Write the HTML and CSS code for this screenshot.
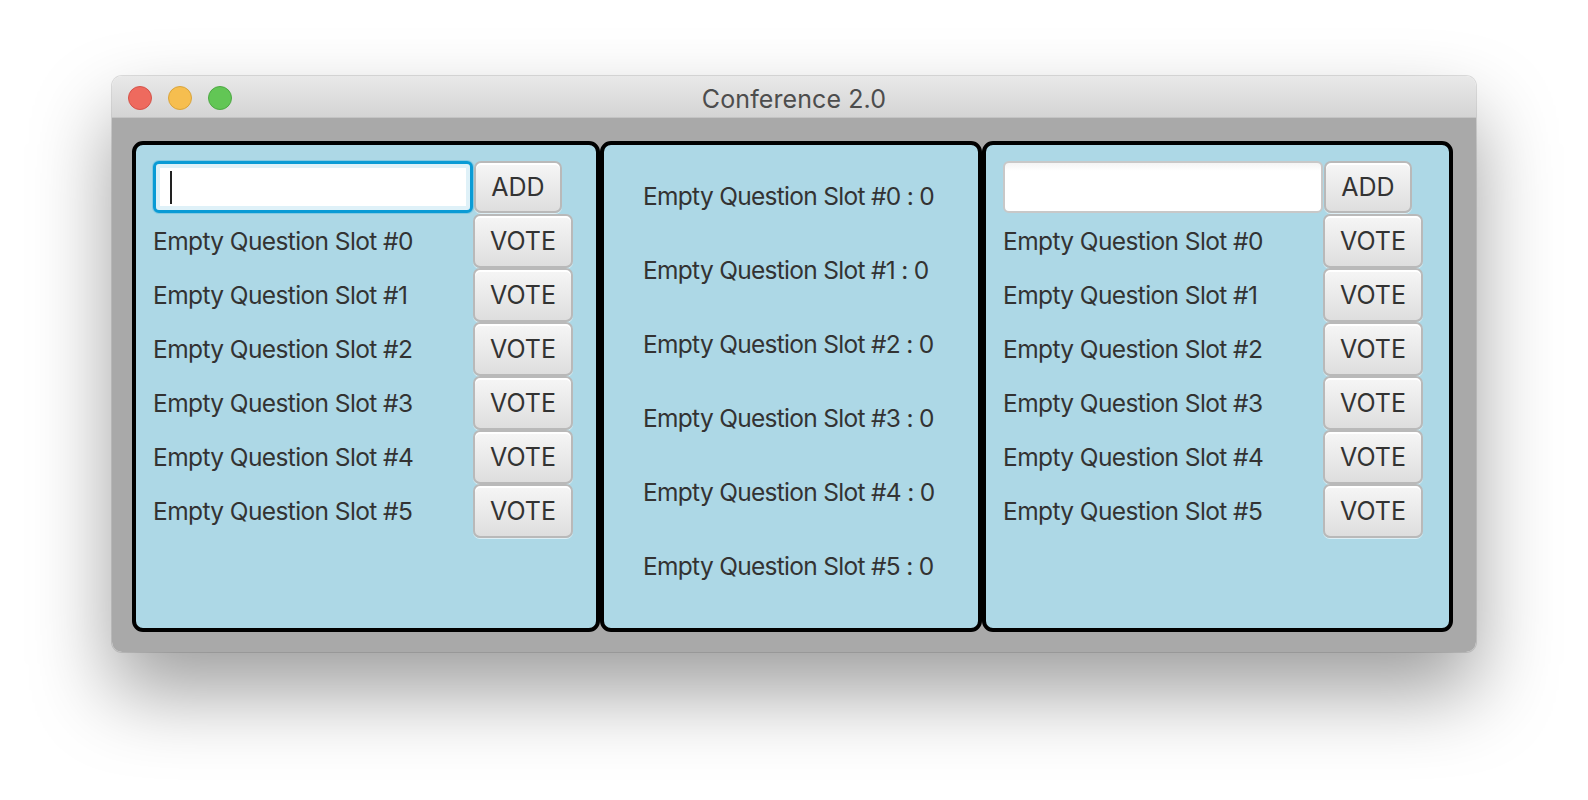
FILE: index.html
```html
<!DOCTYPE html>
<html>
<head>
<meta charset="utf-8">
<link rel="stylesheet" href="styles.css">
</head>
<body>
<div class="window">
  <div class="titlebar">
    <div class="lights">
      <span class="light red"></span>
      <span class="light yellow"></span>
      <span class="light green"></span>
    </div>
    <div class="title">Conference 2.0</div>
  </div>
  <div class="content">
    <div class="panel side">
      <div class="row">
        <div class="field focused"><span class="caret"></span></div>
        <button class="btn add">ADD</button>
      </div>
      <div class="row"><span class="label">Empty Question Slot #0</span><button class="btn vote">VOTE</button></div>
      <div class="row"><span class="label">Empty Question Slot #1</span><button class="btn vote">VOTE</button></div>
      <div class="row"><span class="label">Empty Question Slot #2</span><button class="btn vote">VOTE</button></div>
      <div class="row"><span class="label">Empty Question Slot #3</span><button class="btn vote">VOTE</button></div>
      <div class="row"><span class="label">Empty Question Slot #4</span><button class="btn vote">VOTE</button></div>
      <div class="row"><span class="label">Empty Question Slot #5</span><button class="btn vote">VOTE</button></div>
    </div>
    <div class="panel middle">
      <div class="mlabel">Empty Question Slot #0 : 0</div>
      <div class="mlabel">Empty Question Slot #1 : 0</div>
      <div class="mlabel">Empty Question Slot #2 : 0</div>
      <div class="mlabel">Empty Question Slot #3 : 0</div>
      <div class="mlabel">Empty Question Slot #4 : 0</div>
      <div class="mlabel">Empty Question Slot #5 : 0</div>
    </div>
    <div class="panel side right">
      <div class="row">
        <div class="field"></div>
        <button class="btn add">ADD</button>
      </div>
      <div class="row"><span class="label">Empty Question Slot #0</span><button class="btn vote">VOTE</button></div>
      <div class="row"><span class="label">Empty Question Slot #1</span><button class="btn vote">VOTE</button></div>
      <div class="row"><span class="label">Empty Question Slot #2</span><button class="btn vote">VOTE</button></div>
      <div class="row"><span class="label">Empty Question Slot #3</span><button class="btn vote">VOTE</button></div>
      <div class="row"><span class="label">Empty Question Slot #4</span><button class="btn vote">VOTE</button></div>
      <div class="row"><span class="label">Empty Question Slot #5</span><button class="btn vote">VOTE</button></div>
    </div>
  </div>
</div>
</body>
</html>
```

FILE: styles.css
```css
html, body {
  margin: 0;
  padding: 0;
  background: #ffffff;
  width: 1588px;
  height: 800px;
  overflow: hidden;
}
body {
  padding: 76px 0 0 112px;
  box-sizing: border-box;
  font-family: Inter, "Open Sans", sans-serif;
}
.window {
  width: 1364px;
  border-radius: 10px;
  overflow: hidden;
  box-shadow: 0 40px 80px rgba(0, 0, 0, 0.38), 0 0 0 1px rgba(0, 0, 0, 0.12);
}
.titlebar {
  position: relative;
  height: 41px;
  background: linear-gradient(#e9e9e9, #d4d4d4);
  border-bottom: 1px solid #c4c4c4;
  display: flex;
  align-items: center;
  justify-content: center;
}
.lights {
  position: absolute;
  left: 16px;
  top: 10px;
  display: flex;
  gap: 16px;
}
.light {
  width: 22px;
  height: 22px;
  border-radius: 50%;
  display: block;
}
.red { background: #ee6a5e; border: 1px solid #d4534a; }
.yellow { background: #f6be4f; border: 1px solid #d9a43c; }
.green { background: #62c655; border: 1px solid #4ea844; }
.title {
  font-size: 25px;
  color: #4d4d4d;
  letter-spacing: 0.1px;
  padding-top: 4px;
}
.content {
  background: #a9a9a9;
  padding: 23px 23px 20px 20px;
  display: flex;
}
.panel {
  height: 491px;
  box-sizing: border-box;
  background: #add8e6;
  border: 4px solid #000;
  border-radius: 11px;
}
.side {
  width: 468px;
  padding: 16px 0 0 17px;
  display: flex;
  flex-direction: column;
  gap: 2px;
}
.right { width: 471px; }
.middle {
  width: 382px;
  padding: 14px 0 0 39px;
}
.row {
  display: flex;
  align-items: center;
  height: 52px;
}
.label {
  width: 320px;
  font-size: 24.5px;
  letter-spacing: -0.6px;
  color: #333;
  white-space: nowrap;
}
.mlabel {
  height: 74px;
  line-height: 74px;
  font-size: 24.5px;
  letter-spacing: -0.7px;
  color: #333;
  white-space: nowrap;
}
.field {
  width: 320px;
  height: 52px;
  box-sizing: border-box;
  background: linear-gradient(#f4f4f4, #ffffff 8px);
  border: 2px solid #c8c8c8;
  border-radius: 6px;
  margin-right: 1px;
  position: relative;
}
.field.focused {
  background: #ffffff;
  border: 3px solid #0a9bd5;
  box-shadow: inset 0 0 0 4px #dff1f8, 0 0 0 1px rgba(10, 155, 213, 0.25);
}
.caret {
  position: absolute;
  left: 14px;
  top: 7px;
  width: 2px;
  height: 33px;
  background: #222;
}
.btn {
  font-family: Inter, "Open Sans", sans-serif;
  font-size: 25px;
  color: #333;
  box-sizing: border-box;
  height: 52px;
  border: 2px solid #b9b9b9;
  border-radius: 7px;
  background: linear-gradient(#f6f6f6, #dedede);
  box-shadow: inset 0 2px 0 #ffffff, 0 1px 0 rgba(255, 255, 255, 0.6);
  padding: 0;
  margin: 0;
}
.add { width: 88px; }
.vote { width: 100px; height: 54px; }
```
